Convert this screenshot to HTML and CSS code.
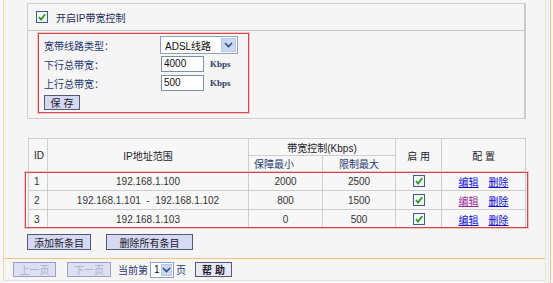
FILE: index.html
```html
<!DOCTYPE html>
<html>
<head>
<meta charset="utf-8">
<link rel="stylesheet" href="styles.css">
</head>
<body>
<div class="page">
  <div class="frame">
    <div class="main">
      <div class="topbox">
        <div class="tophead">
          <svg class="cb" width="12" height="12" viewBox="0 0 12 12"><rect x="0.5" y="0.5" width="11" height="11" fill="#f2f4f2" stroke="#3d5f80"/><path d="M3 6 L5 8.5 L9.2 3.3" fill="none" stroke="#2b9a2b" stroke-width="1.8"/></svg>
          <span class="toptitle">开启IP带宽控制</span>
        </div>
        <div class="topbody">
          <div class="redform">
            <div class="frow">
              <span class="flabel">宽带线路类型：</span>
              <div class="sel"><span class="seltext">ADSL线路</span><span class="selarrow"><svg width="9" height="6" viewBox="0 0 9 6"><path d="M1 1 L4.5 4.5 L8 1" fill="none" stroke="#2c4f8a" stroke-width="1.6"/></svg></span></div>
            </div>
            <div class="frow r2">
              <span class="flabel">下行总带宽：</span>
              <span class="inp">4000</span><span class="unit">Kbps</span>
            </div>
            <div class="frow r3">
              <span class="flabel">上行总带宽：</span>
              <span class="inp">500</span><span class="unit">Kbps</span>
            </div>
            <div class="frow r4"><span class="btn save">保 存</span></div>
          </div>
        </div>
      </div>

      <div class="tablewrap">
        <table class="grid">
          <colgroup><col class="c1"><col class="c2"><col class="c3"><col class="c4"><col class="c5"><col class="c6"></colgroup>
          <tr class="h1">
            <th rowspan="2">ID</th>
            <th rowspan="2">IP地址范围</th>
            <th colspan="2">带宽控制(Kbps)</th>
            <th rowspan="2">启 用</th>
            <th rowspan="2">配 置</th>
          </tr>
          <tr class="h2"><th>保障最小</th><th>限制最大</th></tr>
          <tr class="d"><td>1</td><td>192.168.1.100</td><td>2000</td><td>2500</td><td><svg class="cb" width="12" height="12" viewBox="0 0 12 12"><rect x="0.5" y="0.5" width="11" height="11" fill="#f2f4f2" stroke="#3d5f80"/><path d="M3 6 L5 8.5 L9.2 3.3" fill="none" stroke="#2b9a2b" stroke-width="1.8"/></svg></td><td><a class="lnk">编辑</a><a class="lnk">删除</a></td></tr>
          <tr class="d"><td>2</td><td>192.168.1.101&nbsp; - &nbsp;192.168.1.102</td><td>800</td><td>1500</td><td><svg class="cb" width="12" height="12" viewBox="0 0 12 12"><rect x="0.5" y="0.5" width="11" height="11" fill="#f2f4f2" stroke="#3d5f80"/><path d="M3 6 L5 8.5 L9.2 3.3" fill="none" stroke="#2b9a2b" stroke-width="1.8"/></svg></td><td><a class="lnk visited">编辑</a><a class="lnk">删除</a></td></tr>
          <tr class="d"><td>3</td><td>192.168.1.103</td><td>0</td><td>500</td><td><svg class="cb" width="12" height="12" viewBox="0 0 12 12"><rect x="0.5" y="0.5" width="11" height="11" fill="#f2f4f2" stroke="#3d5f80"/><path d="M3 6 L5 8.5 L9.2 3.3" fill="none" stroke="#2b9a2b" stroke-width="1.8"/></svg></td><td><a class="lnk">编辑</a><a class="lnk">删除</a></td></tr>
        </table>
        <div class="redrows"></div>
      </div>

      <div class="actions">
        <span class="btn add">添加新条目</span>
        <span class="btn delall">删除所有条目</span>
      </div>
    </div>
    <div class="bottombar">
      <span class="btn dis prev">上一页</span>
      <span class="btn dis next">下一页</span>
      <span class="cur">当前第</span>
      <div class="sel small"><span class="seltext">1</span><span class="selarrow"><svg width="9" height="6" viewBox="0 0 9 6"><path d="M1 1 L4.5 4.5 L8 1" fill="none" stroke="#2c4f8a" stroke-width="1.6"/></svg></span></div>
      <span class="pg">页</span>
      <span class="btn help">帮 助</span>
    </div>
  </div>
  <div class="vline blue"></div>
  <div class="vline orange"></div>
</div>
</body>
</html>
```

FILE: styles.css
```css
* { box-sizing: border-box; }
html, body { margin: 0; padding: 0; background: #ffffff; }
body {
  font-family: "Liberation Sans", "Noto Sans CJK SC", sans-serif;
  font-size: 10px;
  color: #222;
}
.page {
  width: 553px;
  height: 283px;
  display: flex;
  padding-left: 3px;
  background: #f6f6f6;
}
.frame {
  width: 543px;
  height: 281px;
  border-left: 1px solid #f6d3a6;
  border-right: 1px solid #fbe4c8;
  border-bottom: 1px solid #d9e6e2;
  display: flex;
  flex-direction: column;
  background: #f5f5f5;
}
.vline { width: 1px; height: 283px; }
.vline.blue { margin-left: 2px; background: #dcecf6; }
.vline.orange { margin-left: 1px; background: #f6c88e; }

.main {
  padding-left: 23px;
  padding-top: 3px;
  height: 259px;
  flex: none;
  border-bottom: 1px solid #f3c27f;
}
.topbox {
  width: 499px;
  height: 116px;
  border: 1px solid #cfcfcf;
  border-right: 2px solid #c9c9c9;
}
.tophead {
  height: 27px;
  border-bottom: 1px solid #c4c4c4;
  display: flex;
  align-items: center;
  padding-left: 8px;
}
.toptitle { margin-left: 8px; color: #1d2f5c; }
.topbody { padding: 2px 0 0 10px; }
.redform {
  width: 211px;
  height: 80px;
  border: 1px solid #d24848;
  box-shadow: 0 0 0 1px #f3c3c3;
  padding: 2px 0 0 5px;
}
.frow { display: flex; align-items: center; height: 18px; }
.frow.r2 { margin-top: 2px; height: 16px; }
.frow.r3 { margin-top: 3px; height: 16px; }
.frow.r4 { margin-top: 4px; height: 15px; }
.flabel { width: 116px; color: #1f3870; }
.sel {
  width: 78px;
  height: 18px;
  border: 1px solid #8aa2bf;
  background: #fff;
  display: flex;
  align-items: center;
  justify-content: space-between;
  padding-left: 4px;
  padding-right: 1px;
}
.seltext { color: #111; }
.selarrow {
  width: 15px;
  height: 14px;
  background: #c9d8ef;
  border: 1px solid #b5c8e6;
  display: flex;
  align-items: center;
  justify-content: center;
}
.inp {
  width: 43px;
  height: 16px;
  margin-left: 1px;
  border: 1px solid #7b8fa9;
  background: #fff;
  padding-left: 2px;
  line-height: 14px;
  color: #111;
}
.unit {
  margin-left: 6px;
  font-family: "Liberation Serif", serif;
  font-weight: bold;
  color: #2d3f66;
  font-size: 9px;
}
.btn {
  display: inline-flex;
  align-items: center;
  justify-content: center;
  background: #d6d9f3;
  border: 1px solid #555a70;
  color: #1a1a2a;
  height: 15px;
}
.save { width: 36px; }

.tablewrap { position: relative; margin-top: 19px; width: 499px; }
.grid {
  border-collapse: collapse;
  width: 498px;
  table-layout: fixed;
  border: 1px solid #c3c3c3;
  margin-left: 1px;
}
.c1 { width: 19px; } .c2 { width: 201px; } .c3 { width: 74px; }
.c4 { width: 73px; } .c5 { width: 46px; } .c6 { width: 84px; }
.grid th, .grid td {
  border: 1px solid #cdcdcd;
  text-align: center;
  padding: 0;
  font-weight: normal;
  background: #f7f7f7;
}
.grid th:first-child, .grid td:first-child { text-align: left; padding-left: 5px; }
.grid th { color: #1b1b2b; }
.h1 th { height: 17px; }
.h2 th { height: 15px; color: #1f3870; }
.d td { height: 19px; color: #333; }
.d td .cb { display: block; margin: 0 auto; }
.lnk { color: #1010d0; text-decoration: underline; margin: 0 5px; }
.lnk.visited { color: #9a2a9a; }
.redrows {
  position: absolute;
  left: -2px;
  top: 34px;
  width: 503px;
  height: 56px;
  border: 1px solid #d24848;
  box-shadow: 0 0 0 1px #f3c3c3;
  pointer-events: none;
}

.actions { display: flex; margin-top: 5px; height: 16px; }
.add { width: 64px; height: 16px; }
.delall { width: 87px; height: 16px; margin-left: 15px; }

.bottombar {
  display: flex;
  align-items: center;
  height: 21px;
  flex: none;
  padding-left: 9px;
}
.dis { color: #a8aecb; background: #dde0f3; border-color: #9aa0bd; width: 43px; }
.next { margin-left: 11px; width: 44px; }
.cur { margin-left: 7px; color: #1f3870; }
.sel.small { width: 24px; height: 16px; margin-left: 2px; padding-left: 3px; }
.sel.small .selarrow { width: 11px; height: 12px; }
.pg { margin-left: 2px; color: #1f3870; }
.help { margin-left: 9px; width: 37px; background: #e8e9f5; font-weight: bold; }
```
